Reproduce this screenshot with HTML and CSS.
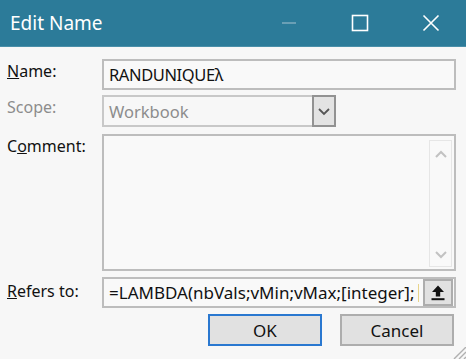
FILE: index.html
```html
<!DOCTYPE html>
<html lang="en">
<head>
    <meta charset="UTF-8">
    <title>Edit Name</title>
    <link rel="stylesheet" href="styles.css">
</head>
<body>
    <div class="dialog">
        <div class="titlebar">
            <span class="title">Edit Name</span>
            <div class="controls">
                <div class="ctrl">
                    <svg width="16" height="16" viewBox="0 0 16 16"><line x1="1" y1="8" x2="15" y2="8" stroke="#8db4c4" stroke-width="1.3"/></svg>
                </div>
                <div class="ctrl">
                    <svg width="18" height="18" viewBox="0 0 18 18"><rect x="1.5" y="1.5" width="15" height="15" fill="none" stroke="#fff" stroke-width="1.6"/></svg>
                </div>
                <div class="ctrl">
                    <svg width="18" height="18" viewBox="0 0 18 18"><path d="M1.5 1.5 L16.5 16.5 M16.5 1.5 L1.5 16.5" stroke="#fff" stroke-width="1.6"/></svg>
                </div>
            </div>
        </div>

        <div class="content">
            <div class="row">
                <div class="label"><u>N</u>ame:</div>
                <div class="field name-field">RANDUNIQUEλ</div>
            </div>

            <div class="row row-scope">
                <div class="label disabled">Scope:</div>
                <div class="combo">
                    <div class="combo-text">Workbook</div>
                    <div class="combo-btn">
                        <svg width="14" height="10" viewBox="0 0 14 10"><path d="M2 3 L7 8 L12 3" fill="none" stroke="#555" stroke-width="1.8"/></svg>
                    </div>
                </div>
            </div>

            <div class="row row-comment">
                <div class="label">C<u>o</u>mment:</div>
                <div class="field memo">
                    <div class="scrollbar">
                        <svg width="14" height="10" viewBox="0 0 14 10"><path d="M2 8 L7 3 L12 8" fill="none" stroke="#c2c2c2" stroke-width="2"/></svg>
                        <svg width="14" height="10" viewBox="0 0 14 10"><path d="M2 2 L7 7 L12 2" fill="none" stroke="#c2c2c2" stroke-width="2"/></svg>
                    </div>
                </div>
            </div>

            <div class="row row-refers">
                <div class="label"><u>R</u>efers to:</div>
                <div class="field refers">
                    <span class="formula">=LAMBDA(nbVals;vMin;vMax;[integer];<span class="caret"></span></span>
                    <div class="pick-btn">
                        <svg width="18" height="18" viewBox="0 0 18 18"><path d="M9 1.5 L15 8 L11.2 8 L11.2 12.5 L6.8 12.5 L6.8 8 L3 8 Z" fill="#111"/><rect x="2.5" y="14.2" width="13" height="2" fill="#111"/></svg>
                    </div>
                </div>
            </div>

            <div class="buttons">
                <button class="btn btn-default">OK</button>
                <button class="btn">Cancel</button>
            </div>
        </div>

        <svg class="grip" width="16" height="12" viewBox="0 0 16 12"><path d="M4 12 L16 0 M9 12 L16 5 M14 12 L16 10" stroke="#b0b0b0" stroke-width="1.4"/></svg>
    </div>
</body>
</html>
```

FILE: styles.css
```css
* {
    box-sizing: border-box;
}

body {
    margin: 0;
    background: #f7f7f7;
    font-family: "Noto Sans", "Open Sans", sans-serif;
    color: #111;
}

.dialog {
    position: relative;
    height: 359px;
    overflow: hidden;
}

.titlebar {
    height: 47px;
    background: #2c7b99;
    border-bottom: 1px solid #4a8fa9;
    display: flex;
    align-items: center;
    color: #fff;
}

.title {
    flex: 1;
    padding-left: 10px;
    font-size: 19px;
}

.controls {
    display: flex;
    align-self: stretch;
}

.ctrl {
    width: 71px;
    display: flex;
    align-items: center;
    justify-content: center;
}

.content {
    padding: 12px 10px 0 7px;
}

.row {
    display: flex;
}

.row-scope { margin-top: 5px; }
.row-comment { margin-top: 7px; }
.row-refers { margin-top: 6px; }

.label {
    width: 95px;
    font-size: 16px;
    line-height: 22px;
    padding-top: 1px;
}

.row-refers .label {
    padding-top: 3px;
}

.label.disabled {
    color: #8c8c8c;
}

.field {
    width: 354px;
    height: 31px;
    border: 2px solid #bdbdbd;
    background: #f9f9f9;
    padding-left: 5px;
    display: flex;
    align-items: center;
    font-size: 16.5px;
}

.name-field {
    letter-spacing: -0.4px;
}

.combo {
    display: flex;
    width: 234px;
    height: 32px;
}

.combo-text {
    flex: 1;
    border: 2px solid #c8c8c8;
    border-right: none;
    padding-left: 5px;
    display: flex;
    align-items: center;
    font-size: 16.5px;
    color: #8c8c8c;
}

.combo-btn {
    width: 24px;
    border: 2px solid #929292;
    background: #e3e3e3;
    display: flex;
    align-items: center;
    justify-content: center;
}

.memo {
    height: 137px;
    align-items: stretch;
    justify-content: flex-end;
    padding: 4px 2px 2px 0;
}

.scrollbar {
    width: 23px;
    border: 1px solid #e6e6e6;
    display: flex;
    flex-direction: column;
    justify-content: space-between;
    align-items: center;
    padding: 8px 0 6px;
}

.refers {
    padding-right: 1px;
    align-items: stretch;
    font-size: 17px;
}

.formula {
    flex: 1;
    display: flex;
    align-items: center;
    white-space: nowrap;
    overflow: hidden;
}

.caret {
    display: inline-block;
    width: 1px;
    height: 18px;
    margin-left: 3px;
    background: #e8d48a;
}

.pick-btn {
    width: 30px;
    background: #e1e1e1;
    border: 2px solid #adadad;
    display: flex;
    align-items: center;
    justify-content: center;
}

.buttons {
    display: flex;
    justify-content: flex-end;
    gap: 18px;
    margin-top: 6px;
    padding-right: 2px;
}

.btn {
    width: 114px;
    height: 32px;
    background: #e1e1e1;
    border: 2px solid #adadad;
    font-family: inherit;
    font-size: 17px;
    color: #111;
    padding: 0;
}

.btn-default {
    border-color: #2a78d0;
}

.grip {
    position: absolute;
    right: 0;
    bottom: 0;
}
```
